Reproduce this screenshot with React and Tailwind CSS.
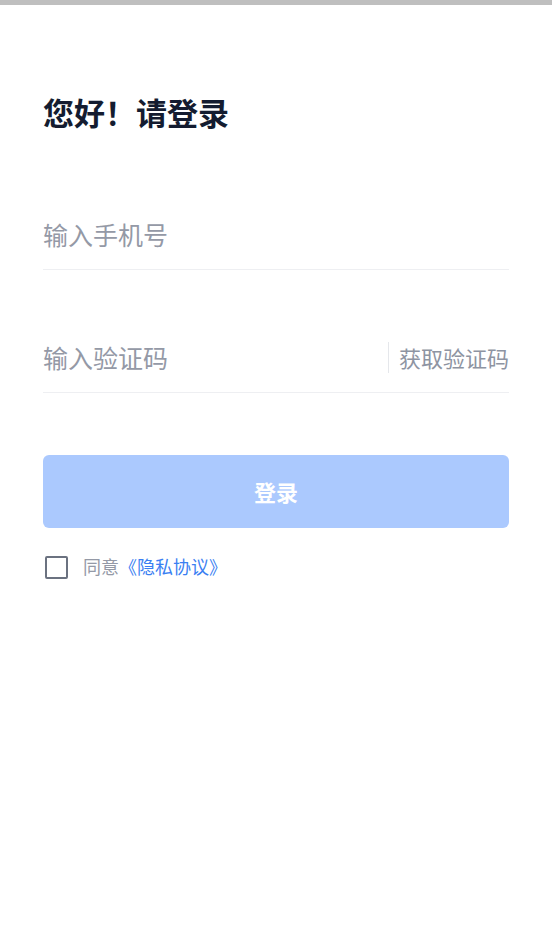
import { useState } from 'react'

const font = { fontFamily: '"Noto Sans CJK SC", "Noto Sans", sans-serif' }

const App = () => {
  const [phone, setPhone] = useState('')
  const [code, setCode] = useState('')
  const [agree, setAgree] = useState(false)

  return (
    <div className="min-h-[951px] bg-white" style={font}>
      <div className="h-[5px] bg-[#bfbfbf]" />
      <div className="px-[43px]">
        <h1 className="mt-[89px] text-[31px] leading-[36px] font-bold text-[#141c30]">您好！请登录</h1>

        <div className="mt-[73px] h-[67px] flex items-center border-b border-[#eeeff2]">
          <input
            className="w-full h-full pb-[4px] text-[25px] text-[#111827] placeholder-[#9499a6] outline-none bg-transparent"
            placeholder="输入手机号"
            value={phone}
            onChange={(e) => setPhone(e.target.value)}
          />
        </div>

        <div className="mt-[56px] h-[67px] flex items-center border-b border-[#eeeff2]">
          <input
            className="flex-1 min-w-0 h-full pb-[4px] text-[25px] text-[#111827] placeholder-[#9499a6] outline-none bg-transparent"
            placeholder="输入验证码"
            value={code}
            onChange={(e) => setCode(e.target.value)}
          />
          <div className="w-px h-[31px] mb-[4px] bg-[#e5e7eb]" />
          <button className="pl-[10px] pb-[4px] text-[22px] text-[#8e94a2] whitespace-nowrap">获取验证码</button>
        </div>

        <button className="mt-[62px] w-full h-[73px] rounded-[6px] bg-[#abc9fe] text-white text-[22px] font-bold">
          登录
        </button>

        <div className="mt-[26px] h-[27px] flex items-center">
          <button
            onClick={() => setAgree(!agree)}
            className="ml-[2px] w-[23px] h-[23px] border-2 border-[#6b7280] rounded-[2px]"
          />
          <span className="ml-[15px] pb-[2px] text-[18px] leading-[27px] text-[#9499a6]">同意</span>
          <span className="pb-[2px] text-[18px] leading-[27px] text-[#3b7ff2]">《隐私协议》</span>
        </div>
      </div>
    </div>
  )
}

export default App
